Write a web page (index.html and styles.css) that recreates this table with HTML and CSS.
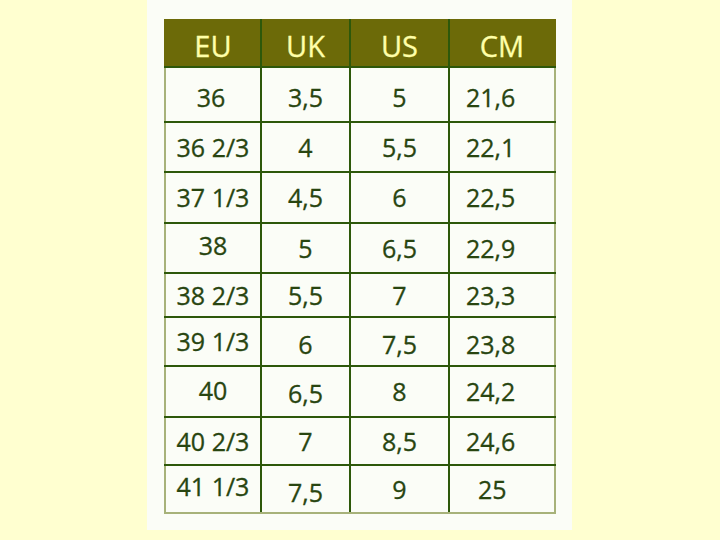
FILE: index.html
```html
<!DOCTYPE html>
<html>
<head>
<meta charset="utf-8">
<link rel="stylesheet" href="styles.css">
</head>
<body>
<div class="panel">
<table class="sizes">
<thead>
<tr><th>EU</th><th>UK</th><th>US</th><th>CM</th></tr>
</thead>
<tbody>
<tr><td>36</td><td>3,5</td><td>5</td><td>21,6</td></tr>
<tr><td>36 2/3</td><td>4</td><td>5,5</td><td>22,1</td></tr>
<tr><td>37 1/3</td><td>4,5</td><td>6</td><td>22,5</td></tr>
<tr><td class="up">38</td><td>5</td><td>6,5</td><td>22,9</td></tr>
<tr><td>38 2/3</td><td>5,5</td><td>7</td><td>23,3</td></tr>
<tr><td>39 1/3</td><td class="down">6</td><td class="down">7,5</td><td class="down">23,8</td></tr>
<tr><td class="up-s">40</td><td class="down-s">6,5</td><td>8</td><td>24,2</td></tr>
<tr><td>40 2/3</td><td>7</td><td>8,5</td><td>24,6</td></tr>
<tr><td class="up">41 1/3</td><td class="down">7,5</td><td>9</td><td class="last">25</td></tr>
</tbody>
</table>
</div>
</body>
</html>
```
FILE: styles.css
```css
html, body {
  margin: 0;
  padding: 0;
  background: #ffffd0;
}
body {
  width: 720px;
  height: 540px;
  overflow: hidden;
  font-family: "Open Sans", "Noto Sans", sans-serif;
}
.panel {
  margin-left: 147px;
  width: 425px;
  height: 530px;
  background: #fbfdf7;
  box-sizing: border-box;
  padding: 19px 0 0 17px;
}
.sizes {
  border-collapse: collapse;
  table-layout: fixed;
  width: 390px;
}
.sizes th, .sizes td {
  border: 2px solid #2d580a;
  padding: 0;
  text-align: center;
  vertical-align: middle;
}
.sizes th {
  background: #6c6a08;
  color: #ffffa8;
  font-weight: 400;
  font-size: 29px;
  height: 42px;
  padding-top: 3px;
  border-top: 2px solid #6c6a08;
  line-height: 1;
  -webkit-text-stroke: 0.3px #ffffa8;
}
.sizes th:first-child { border-left-color: #6c6a08; }
.sizes th:last-child { border-right-color: #6c6a08; }
.sizes td {
  color: #284510;
  font-size: 25px;
  font-weight: 400;
  line-height: 1;
  -webkit-text-stroke: 0.3px #284510;
}
.sizes th:nth-child(1) { width: 94px; }
.sizes th:nth-child(2) { width: 87px; }
.sizes th:nth-child(3) { width: 97px; }
.sizes th:nth-child(4) { width: 104px; }
.sizes td:first-child { border-left: 2px solid #a7b27a; }
.sizes td:last-child {
  border-right: 2px solid #a7b27a;
  text-align: left;
  padding-left: 16px;
}
.sizes td.last { padding-left: 28px; }
.sizes td.up { padding-bottom: 6px; }
.sizes td.down { padding-top: 6px; }
.sizes td.up-s { padding-bottom: 3px; }
.sizes td.down-s { padding-top: 4px; }
.sizes tbody tr:last-child td { border-bottom: 2px solid #a7b27a; }
.sizes tbody tr:nth-child(1) td { height: 47px; padding-top: 6px; }
.sizes tbody tr:nth-child(1) td:first-child { padding-right: 4px; }
.sizes tbody tr:nth-child(2) td { height: 48px; }
.sizes tbody tr:nth-child(3) td { height: 49px; }
.sizes tbody tr:nth-child(4) td { height: 48px; }
.sizes tbody tr:nth-child(5) td { height: 42px; }
.sizes tbody tr:nth-child(6) td { height: 47px; }
.sizes tbody tr:nth-child(7) td { height: 49px; }
.sizes tbody tr:nth-child(8) td { height: 46px; }
.sizes tbody tr:nth-child(9) td { height: 46px; }
.sizes tbody tr td.up, .sizes tbody tr td.down,
.sizes tbody tr td.up-s, .sizes tbody tr td.down-s { height: auto; }
```
